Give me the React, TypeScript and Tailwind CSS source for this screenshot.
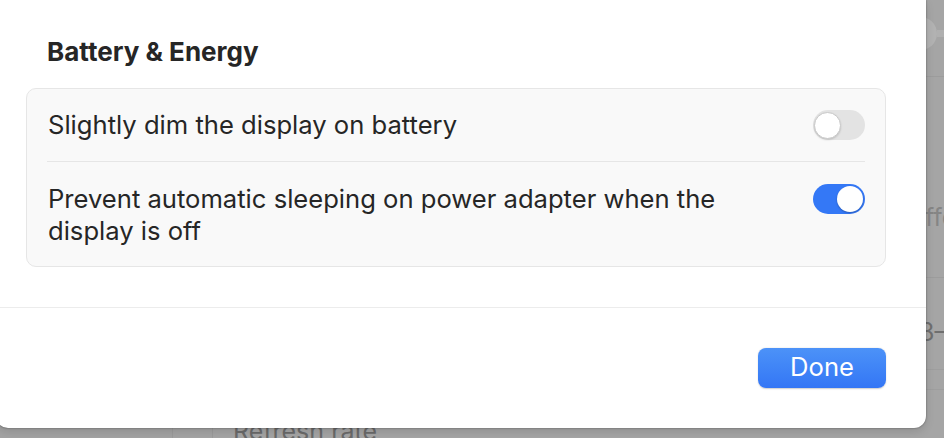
import React from "react";

function Toggle({ on }: { on: boolean }) {
  return on ? (
    <div className="flex h-[30px] w-[52px] shrink-0 items-center justify-end rounded-full bg-[#3478f6] px-[2px]">
      <div className="h-[26px] w-[26px] rounded-full bg-white shadow-[0_1px_2px_rgba(0,0,0,0.25)]" />
    </div>
  ) : (
    <div className="flex h-[30px] w-[52px] shrink-0 items-center justify-start rounded-full bg-[#e3e3e3] px-[1px]">
      <div className="h-[27px] w-[27px] rounded-full border border-[#c9c9c9] bg-white shadow-[0_1px_2px_rgba(0,0,0,0.15)]" />
    </div>
  );
}

export default function App() {
  return (
    <div className="relative h-[438px] w-[944px] overflow-hidden bg-[#a5a5a5] font-[Inter,sans-serif] text-[#262626]">
      {/* dimmed window behind */}
      <div className="flex h-full w-full">
        <div className="h-full w-[172px] shrink-0 bg-[#a3a3a3]" />
        <div className="h-full w-[40px] shrink-0 border-l border-[#9b9b9b] bg-[#a4a4a4]" />
        <div className="flex h-full flex-1 flex-col border-l border-[#9b9b9b]">
          <div className="relative h-[77px] shrink-0 border-b border-[#9c9c9c]">
            <div className="absolute left-[724px] right-0 top-[30px] h-[7px] bg-[#b0b0b0]" />
            <div className="absolute left-[691px] top-[17px] h-[33px] w-[33px] rounded-full bg-[#b2b2b2]" />
          </div>
          <div className="flex h-[201px] shrink-0 items-start justify-start overflow-hidden whitespace-nowrap border-b border-[#9c9c9c] pl-[697px] pt-[124px]">
            <span className="text-[25px] leading-[32px] text-[#858585]">Effect</span>
          </div>
          <div className="flex h-[92px] shrink-0 items-start justify-start overflow-hidden whitespace-nowrap border-b border-[#9e9e9e] pl-[706px] pt-[38px]">
            <span className="text-[25px] leading-[32px] text-[#6f6f6f]">8–</span>
          </div>
          <div className="h-[20px] shrink-0 border-b border-[#9e9e9e]" />
          <div className="flex-1 pl-[20px] pt-[25px]">
            <span className="text-[25px] leading-[32px] text-[#6a6a6a]">Refresh rate</span>
          </div>
        </div>
      </div>

      {/* sheet */}
      <div className="absolute left-[-4px] top-0 flex h-[428px] w-[930px] flex-col rounded-b-[12px] bg-white shadow-[0_0_2px_rgba(0,0,0,0.45),0_4px_10px_rgba(0,0,0,0.12)]">
        <div className="pl-[30px] pr-[40px] pt-[36px]">
          <h2 className="pl-[21px] text-[26px] font-bold leading-[32px] text-[#262626]">Battery &amp; Energy</h2>
          <div className="mt-[20px] rounded-[10px] border border-[#e6e6e6] bg-[#f9f9f9] px-[20px]">
            <div className="flex items-center justify-between gap-4 py-[20px] pl-[1px]">
              <span className="text-[25.6px] leading-[32px]">Slightly dim the display on battery</span>
              <Toggle on={false} />
            </div>
            <div className="h-px bg-[#e6e6e6]" />
            <div className="flex items-start justify-between gap-4 pb-[19px] pl-[1px] pt-[21px]">
              <span className="max-w-[730px] text-[25.6px] leading-[32px]">
                Prevent automatic sleeping on power adapter when the display is off
              </span>
              <div className="pt-[1px]">
                <Toggle on={true} />
              </div>
            </div>
          </div>
        </div>
        <div className="mt-[40px] h-px bg-[#ececec]" />
        <div className="flex flex-1 items-start justify-end pr-[40px] pt-[40px]">
          <button className="h-[40px] w-[128px] rounded-[8px] bg-gradient-to-b from-[#4c92f8] to-[#3476f5] pb-[2px] text-[25.6px] leading-[32px] text-white shadow-[0_0.5px_1.5px_rgba(0,0,0,0.2)]">
            Done
          </button>
        </div>
      </div>
    </div>
  );
}
